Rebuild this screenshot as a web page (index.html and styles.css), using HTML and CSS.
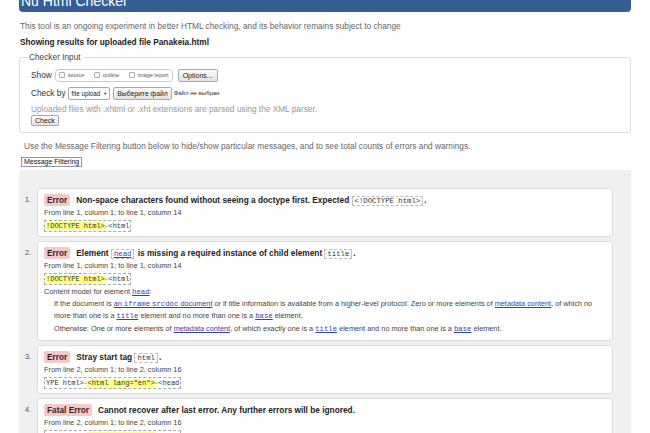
FILE: index.html
```html
<!DOCTYPE html>
<html lang="en">
<head>
<meta charset="utf-8">
<title>Nu Html Checker</title>
<link rel="stylesheet" href="styles.css">
</head>
<body>
<div class="page">
  <header class="topbar"><h1>Nu Html Checker</h1></header>
  <p class="intro">This tool is an ongoing experiment in better HTML checking, and its behavior remains subject to change</p>
  <p class="showing">Showing results for uploaded file Panakeia.html</p>

  <fieldset class="input">
    <legend>Checker Input</legend>
    <div class="row">
      <span class="label">Show</span>
      <span class="opts">
        <span class="opt"><span class="cb"></span>source</span>
        <span class="opt"><span class="cb"></span>outline</span>
        <span class="opt last"><span class="cb"></span>image report</span>
      </span>
      <button class="btn options">Options...</button>
    </div>
    <div class="row">
      <span class="label">Check by</span>
      <span class="select">file upload <span class="caret">▼</span></span>
      <button class="btn file">Выберите файл</button>
      <span class="nofile">Файл не выбран</span>
    </div>
    <p class="note">Uploaded files with .xhtml or .xht extensions are parsed using the XML parser.</p>
    <button class="btn check">Check</button>
  </fieldset>

  <p class="filter-note">Use the Message Filtering button below to hide/show particular messages, and to see total counts of errors and warnings.</p>
  <button class="btn filter">Message Filtering</button>

  <section class="results">
    <ol class="msgs">
      <li class="msg">
        <span class="num">1.</span>
        <div class="box">
          <p class="title"><span class="badge">Error</span>Non-space characters found without seeing a doctype first. Expected <code class="code">&lt;!DOCTYPE html&gt;</code>.</p>
          <p class="loc">From line 1, column 1; to line 1, column 14</p>
          <code class="extract"><mark>!DOCTYPE html&gt;</mark><span class="ret">↩</span>&lt;html</code>
        </div>
      </li>
      <li class="msg">
        <span class="num">2.</span>
        <div class="box">
          <p class="title"><span class="badge">Error</span>Element <a class="code link" href="#">head</a> is missing a required instance of child element <code class="code">title</code>.</p>
          <p class="loc">From line 1, column 1; to line 1, column 14</p>
          <code class="extract"><mark>!DOCTYPE html&gt;</mark><span class="ret">↩</span>&lt;html</code>
          <p class="model">Content model for element <a class="mono" href="#">head</a>:</p>
          <div class="model-dd">
            <p>If the document is <a href="#">an <span class="mono">iframe</span> <span class="mono">srcdoc</span> document</a> or if title information is available from a higher-level protocol: Zero or more elements of <a href="#">metadata content</a>, of which no more than one is a <a class="mono" href="#">title</a> element and no more than one is a <a class="mono" href="#">base</a> element.</p>
            <p class="other">Otherwise: One or more elements of <a href="#">metadata content</a>, of which exactly one is a <a class="mono" href="#">title</a> element and no more than one is a <a class="mono" href="#">base</a> element.</p>
          </div>
        </div>
      </li>
      <li class="msg">
        <span class="num">3.</span>
        <div class="box">
          <p class="title"><span class="badge">Error</span>Stray start tag <code class="code">html</code>.</p>
          <p class="loc">From line 2, column 1; to line 2, column 16</p>
          <code class="extract">YPE html&gt;<span class="ret">↩</span><mark>&lt;html lang="en"&gt;</mark><span class="ret">↩</span>&lt;head</code>
        </div>
      </li>
      <li class="msg">
        <span class="num">4.</span>
        <div class="box">
          <p class="title"><span class="badge">Fatal Error</span>Cannot recover after last error. Any further errors will be ignored.</p>
          <p class="loc">From line 2, column 1; to line 2, column 16</p>
          <code class="extract">YPE html&gt;<span class="ret">↩</span><mark>&lt;html lang="en"&gt;</mark><span class="ret">↩</span>&lt;head</code>
        </div>
      </li>
    </ol>
  </section>
</div>
</body>
</html>
```

FILE: styles.css
```css
html, body {
  margin: 0;
  background: #fff;
}
body {
  font-family: "Liberation Sans", Arial, sans-serif;
  font-size: 8.3px;
  color: #222;
  overflow: hidden;
  height: 433px;
}
p { margin: 0; }

.page {
  padding: 0 19px;
}

.topbar {
  height: 12px;
  overflow: hidden;
  background: #365d96;
  border-radius: 0 0 4px 4px;
}
.topbar h1 {
  margin: -6px 0 0 2px;
  font-size: 14px;
  line-height: 14px;
  font-weight: normal;
  color: #fff;
}

.intro {
  margin: 9px 0 0 1px;
  line-height: 11px;
  color: #666;
}
.showing {
  margin: 5px 0 0 1px;
  line-height: 11px;
  font-weight: bold;
  color: #222;
}

.input {
  margin: 4px 0 0;
  padding: 3px 10px 6px 11px;
  border: 1px solid #ddd;
  border-radius: 3px;
  min-width: 0;
}
.input legend {
  padding: 0 2px;
  margin-left: -4px;
  line-height: 11px;
  color: #444;
}

.row {
  display: flex;
  align-items: center;
  height: 18px;
}
.label {
  color: #333;
}
.opts {
  display: inline-flex;
  align-items: center;
  margin-left: 3px;
  height: 11px;
  padding: 0 3px;
  border: 1px solid #ccc;
  border-radius: 4px;
  font-size: 5.5px;
  color: #555;
}
.opt {
  display: inline-flex;
  align-items: center;
  width: 35px;
}
.opt.last { width: auto; }
.cb {
  width: 4px;
  height: 4px;
  border: 1px solid #aaa;
  border-radius: 1px;
  background: #fff;
  margin-right: 3px;
}

.btn {
  font-family: "Liberation Sans", Arial, sans-serif;
  font-size: 7px;
  color: #222;
  border: 1px solid #aaa;
  border-radius: 2px;
  background: linear-gradient(#fbfbfb, #e3e3e3);
  padding: 0 4px;
  height: 13px;
  line-height: 11px;
  margin: 0;
}
.options { margin-left: 5px; }

.select {
  display: inline-flex;
  align-items: center;
  margin-left: 2px;
  height: 11px;
  padding: 0 2px 0 3px;
  border: 1px solid #aaa;
  border-radius: 2px;
  background: #fff;
  font-size: 6.3px;
  color: #222;
}
.caret {
  font-size: 4px;
  margin-left: 3px;
}
.file {
  margin-left: 3px;
  padding: 0 3px;
  font-size: 6.8px;
}
.nofile {
  margin-left: 2px;
  font-size: 6px;
  color: #333;
}

.note {
  line-height: 14px;
  color: #999;
}
.check {
  display: block;
  margin-top: -1px;
  height: 11px;
  line-height: 9px;
  padding: 0 3px;
}

.filter-note {
  margin: 8px 0 0 5px;
  line-height: 11px;
  color: #666;
}
.filter {
  display: block;
  margin: 5px 0 0 2px;
  height: 10px;
  line-height: 8px;
  padding: 0 2px;
  border: 1px solid #8f98a8;
  border-radius: 0;
  background: #fafafa;
}

.results {
  margin-top: 3px;
  background: #f0f0f0;
  padding: 18px 18px 20px 0;
}
.msgs {
  list-style: none;
  margin: 0;
  padding: 0;
}
.msg {
  display: flex;
  align-items: flex-start;
  margin-bottom: 4px;
}
.num {
  flex: none;
  width: 12px;
  margin-right: 6px;
  padding-top: 6px;
  line-height: 12px;
  text-align: right;
  font-size: 7.3px;
  color: #555;
}
.box {
  flex: 1;
  min-width: 0;
  background: #fff;
  border: 1px solid #ddd;
  border-radius: 3px;
  padding: 5px 10px 4px 6px;
}
.title {
  line-height: 12px;
  font-weight: bold;
  color: #222;
}
.badge {
  display: inline-block;
  padding: 0 3px;
  margin-right: 6px;
  border-radius: 2px;
  background: #f5c9c9;
  color: #3b1f1f;
  line-height: 12px;
}
.code {
  font-family: "Liberation Mono", "DejaVu Sans Mono", monospace;
  font-weight: normal;
  font-size: 7.3px;
  line-height: 10px;
  color: #333;
  border: 1px dashed #bbb;
  padding: 0 2px;
  margin-right: 1px;
}
a {
  color: #3442b0;
  text-decoration: underline;
}
.code.link { color: #3442b0; }
.mono {
  font-family: "Liberation Mono", "DejaVu Sans Mono", monospace;
}

.loc {
  line-height: 13px;
  font-size: 7.3px;
  color: #444;
}
.extract {
  display: block;
  width: fit-content;
  height: 10px;
  margin-top: 1px;
  padding: 0 1px;
  border: 1px dashed #aaa;
  font-family: "Liberation Mono", "DejaVu Sans Mono", monospace;
  font-size: 7px;
  line-height: 10px;
  color: #333;
}
.extract mark {
  background: #ffff80;
  color: #333;
}
.ret {
  color: #999;
  font-size: 6px;
}

.model {
  margin-top: 1px;
  line-height: 12px;
  font-size: 7.3px;
  color: #444;
}
.model-dd {
  margin-left: 10px;
  font-size: 7.3px;
  line-height: 12px;
  color: #444;
  padding-bottom: 1px;
}
.model-dd p {
  line-height: 12px;
}
.model-dd .mono {
  line-height: 10px;
}
.model-dd .other {
  margin-top: 1px;
}
```
